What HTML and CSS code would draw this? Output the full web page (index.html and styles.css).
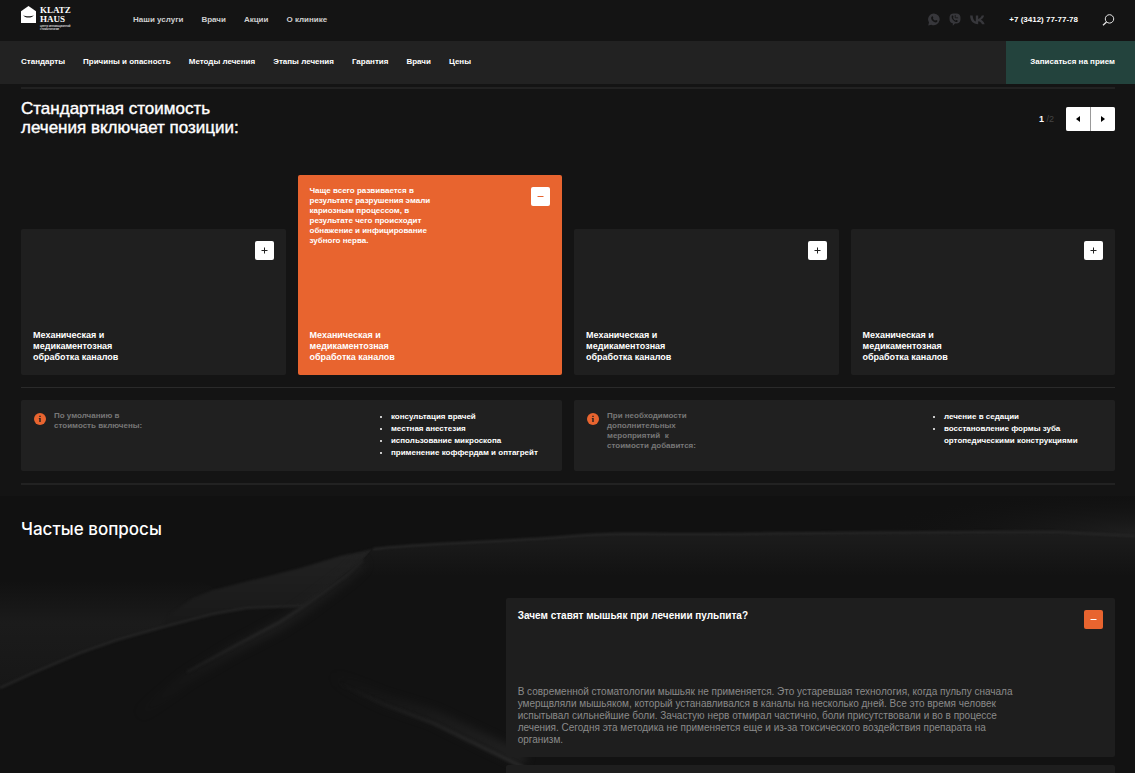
FILE: index.html
```html
<!DOCTYPE html>
<html lang="ru">
<head>
<meta charset="utf-8">
<title>Klatz Haus</title>
<meta name="viewport" content="width=device-width, initial-scale=1">
<link rel="stylesheet" href="styles.css">
</head>
<body>
<header class="header">
  <a class="logo" href="#">
    <svg class="logo-mark" viewBox="0 0 15 17" aria-hidden="true"><path fill="#fff" d="M0 5.2 7.5 0 15 5.2V17H0z"/><path fill="#141414" d="M2.2 9.2c2.6 1.4 8 1.4 10.6 0-1.6 3.2-9 3.2-10.6 0z"/></svg>
    <span class="logo-text">
      <span class="logo-name">KLATZ<br>HAUS</span>
      <span class="logo-note">центр инновационной<br>стоматологии</span>
    </span>
  </a>
  <nav class="menu" aria-label="Основное меню">
    <a href="#">Наши услуги</a><a href="#">Врачи</a><a href="#">Акции</a><a href="#">О клинике</a>
  </nav>
  <div class="socials">
    <a href="#" aria-label="WhatsApp"><svg width="12" height="13" viewBox="0 0 12 13"><path fill="#37373b" d="M6 .4a5.9 5.9 0 0 0-5 9L.2 12.500l3.200-.8A5.900 5.900 0 1 0 6 .4z"/><path fill="#141414" d="M4.100 3.300c.3-.2.600-.1.700.2l.5 1.200c0 .3-.5.6-.5.8.5 1.100 1.300 1.800 2.400 2.200.3 0 .5-.7.900-.7l1.200.6c.3.200.2.700 0 1-1.200 1.600-3.200.7-4.600-.5C3.200 6.700 2.400 4.500 4.100 3.300z"/></svg></a>
    <a href="#" aria-label="Viber"><svg width="12" height="13" viewBox="0 0 12 13"><path fill="#37373b" d="M3 .8c2-.5 4-.5 6 0C11 1.400 11.500 3 11.500 5.500S11 9.700 9 10.200c-1 .3-2 .4-3 .4L3.800 12.800V10.300C1.200 9.800.5 8.500.5 5.500S1.200 1.300 3 .8z"/><path fill="#141414" d="M3.200 2.500c.6-.4 1 .3 1.200 1 .3.800-.5.9-.3 1.500.4 1.300 1.200 2 2.200 2.500.6.200.7-.7 1.300-.4 1 .5 1.400.8 1 1.300-1 1.200-2.400.5-3.600-.5C3.400 6.700 1.700 3.600 3.200 2.500z"/><path fill="none" stroke="#141414" stroke-width=".8" d="M6.200 2v2.800h2.900"/></svg></a>
    <a href="#" aria-label="ВКонтакте"><svg width="15" height="10" viewBox="0 0 15 10"><path fill="#37373b" d="M8.200 9.300C3.100 9.300.3 6 .1.600h2.600C2.800 4.500 4.500 6.200 5.800 6.500V.6h2.400V4c1.400-.2 3-1.700 3.500-3.400h2.400c-.4 2.100-2 3.600-3.200 4.200 1.200.5 3 1.900 3.800 4.500H12C11.500 7.700 10 6.400 8.200 6.200z"/></svg></a>
  </div>
  <a class="phone" href="tel:+73412777778">+7 (3412) 77-77-78</a>
  <button class="search" aria-label="Поиск"><svg width="13" height="12" viewBox="0 0 13 12" fill="none" stroke="#e8e8e8"><circle cx="7.500" cy="4.900" r="4.200"/><path d="M4.500 8 1 11.300" stroke-width="1.300"/></svg></button>
</header>

<div class="subnav">
  <nav class="anchors" aria-label="Разделы страницы">
    <a href="#">Стандарты</a><a href="#">Причины и опасность</a><a href="#">Методы лечения</a><a href="#">Этапы лечения</a><a href="#">Гарантия</a><a href="#">Врачи</a><a href="#">Цены</a>
  </nav>
  <a class="cta" href="#">Записаться на прием</a>
</div>

<main>
  <section class="price">
    <div class="price-head">
      <h2>Стандартная стоимость<br>лечения включает позиции:</h2>
      <div class="pager">
        <span class="count">1 <i>/2</i></span>
        <div class="arrows">
          <button aria-label="Назад"><svg width="4" height="6" viewBox="0 0 4 6"><path d="M4 0v6L0 3z"/></svg></button>
          <button aria-label="Вперед"><svg width="4" height="6" viewBox="0 0 4 6"><path d="M0 0v6l4-3z"/></svg></button>
        </div>
      </div>
    </div>
    <div class="cards">
      <article class="card">
        <button class="toggle" aria-label="Раскрыть"><svg width="7" height="7" viewBox="0 0 7 7"><path d="M.5 3.500h6M3.500.5v6"/></svg></button>
        <h3>Механическая и<br>медикаментозная<br>обработка каналов</h3>
      </article>
      <article class="card card-open">
        <p>Чаще всего развивается в<br>результате разрушения эмали<br>кариозным процессом, в<br>результате чего происходит<br>обнажение и инфицирование<br>зубного нерва.</p>
        <button class="toggle" aria-label="Свернуть"><svg width="7" height="7" viewBox="0 0 7 7"><path d="M.5 3.500h6"/></svg></button>
        <h3>Механическая и<br>медикаментозная<br>обработка каналов</h3>
      </article>
      <article class="card">
        <button class="toggle" aria-label="Раскрыть"><svg width="7" height="7" viewBox="0 0 7 7"><path d="M.5 3.500h6M3.500.5v6"/></svg></button>
        <h3>Механическая и<br>медикаментозная<br>обработка каналов</h3>
      </article>
      <article class="card">
        <button class="toggle" aria-label="Раскрыть"><svg width="7" height="7" viewBox="0 0 7 7"><path d="M.5 3.500h6M3.500.5v6"/></svg></button>
        <h3>Механическая и<br>медикаментозная<br>обработка каналов</h3>
      </article>
    </div>
    <div class="notes">
      <div class="note">
        <div class="note-label">
          <svg width="12" height="12" viewBox="0 0 12 12" aria-hidden="true"><circle cx="6" cy="6" r="6" fill="#e8642f"/><path fill="#202020" d="M5.300 2.800h1.400v1.300H5.300zM4.800 5h1.900v4H5.300V5.800h-.5z"/></svg>
          <p>По умолчанию в<br>стоимость включены:</p>
        </div>
        <ul><li>консультация врачей</li><li>местная анестезия</li><li>использование микроскопа</li><li>применение коффердам и оптагрейт</li></ul>
      </div>
      <div class="note">
        <div class="note-label">
          <svg width="12" height="12" viewBox="0 0 12 12" aria-hidden="true"><circle cx="6" cy="6" r="6" fill="#e8642f"/><path fill="#202020" d="M5.300 2.800h1.400v1.300H5.300zM4.800 5h1.900v4H5.300V5.800h-.5z"/></svg>
          <p>При необходимости<br>дополнительных<br>мероприятий&nbsp; к<br>стоимости добавится:</p>
        </div>
        <ul><li>лечение в седации</li><li>восстановление формы зуба<br>ортопедическими конструкциями</li></ul>
      </div>
    </div>
  </section>

  <section class="faq">
    <svg class="dunes" viewBox="0 0 1135 277" preserveAspectRatio="xMidYMin slice" aria-hidden="true">
      <defs>
        <linearGradient id="far" x1="0" y1="0" x2="0" y2="1"><stop offset="0" stop-color="#222"/><stop offset="1" stop-color="#181818"/></linearGradient>
        <linearGradient id="haze" x1="0" y1="85" x2="0" y2="190" gradientUnits="userSpaceOnUse"><stop offset="0" stop-color="#1b1b1b" stop-opacity="0"/><stop offset=".4" stop-color="#1b1b1b"/><stop offset="1" stop-color="#171717"/></linearGradient>
        <linearGradient id="slope" x1="0" y1="38" x2="0" y2="80" gradientUnits="userSpaceOnUse"><stop offset="0" stop-color="#1c1c1c"/><stop offset="1" stop-color="#121212"/></linearGradient>
        <linearGradient id="fade" x1="130" y1="0" x2="363" y2="0" gradientUnits="userSpaceOnUse"><stop offset="0" stop-color="#242424" stop-opacity="0"/><stop offset=".6" stop-color="#242424"/><stop offset="1" stop-color="#202020"/></linearGradient>
        <linearGradient id="fold" x1="330" y1="0" x2="510" y2="0" gradientUnits="userSpaceOnUse"><stop offset="0" stop-color="#262626" stop-opacity="0"/><stop offset="1" stop-color="#262626"/></linearGradient>
        <radialGradient id="glow" cx="1135" cy="36" r="260" gradientTransform="matrix(1 0 0 .16 0 30)" gradientUnits="userSpaceOnUse"><stop offset="0" stop-color="#1e1e1e"/><stop offset="1" stop-color="#111" stop-opacity="0"/></radialGradient>
        <filter id="soft" x="-20%" y="-20%" width="140%" height="140%" color-interpolation-filters="sRGB"><feGaussianBlur stdDeviation="5"/></filter>
        <filter id="edge" x="-10%" y="-20%" width="120%" height="140%" color-interpolation-filters="sRGB"><feGaussianBlur stdDeviation="1"/></filter>
      </defs>
      <path fill="url(#glow)" d="M800 0H1135V60H800z"/>
      <path fill="url(#haze)" d="M0 85H200L260 115V277H0z"/>
      <path fill="url(#far)" d="M170 118 193 102 213 94 300 72 340 60 373 53 363 64 303 112 247 113 160 134z" filter="url(#edge)"/>
      <path fill="#121212" d="M0 192 33 177 80 157 117 144 167 130 213 118 247 112 303 110 363 64 373 53C420 47 500 46 560 41S640 38 680 38 1000 35 1060 36L1135 40V277H0z"/>
      <path fill="url(#slope)" d="M303 110 363 64 373 53C420 47 500 46 560 41S640 38 680 38 1000 35 1060 36L1135 40V110z"/>
      <path fill="none" stroke="#282828" stroke-width="2" d="M373 53C420 47 500 46 560 41S640 38 680 38 1000 35 1060 36L1135 40" filter="url(#edge)"/>
      <path fill="none" stroke="#262626" stroke-width="2" d="M0 192 33 177 80 157 117 144 167 130 213 118 247 112 303 110" filter="url(#edge)"/>
      <path fill="none" stroke="url(#fade)" stroke-width="9" opacity=".7" d="M363 66 347 81 303 114 280 129 233 154 187 182 140 218" filter="url(#soft)"/>
      <path fill="none" stroke="url(#fade)" stroke-width="3" d="M363 64 347 79 303 111 280 126 233 151 187 176" filter="url(#edge)"/>
      <path fill="none" stroke="url(#fold)" stroke-width="12" opacity=".8" d="M330 180 383 204 433 220 525 264" filter="url(#soft)"/>
      <path fill="none" stroke="url(#fold)" stroke-width="4" d="M340 188 383 208 433 227 525 272" filter="url(#edge)"/>
    </svg>
    <h2>Частые вопросы</h2>
    <div class="faq-list">
      <article class="answer">
        <div class="answer-head">
          <h3>Зачем ставят мышьяк при лечении пульпита?</h3>
          <button class="toggle toggle-accent" aria-label="Свернуть"><svg width="7" height="7" viewBox="0 0 7 7"><path d="M.5 3.500h6"/></svg></button>
        </div>
        <p>В современной стоматологии мышьяк не применяется. Это устаревшая технология, когда пульпу сначала<br>умерщвляли мышьяком, который устанавливался в каналы на несколько дней. Все это время человек<br>испытывал сильнейшие боли. Зачастую нерв отмирал частично, боли присутствовали и во в процессе<br>лечения. Сегодня эта методика не применяется еще и из-за токсического воздействия препарата на<br>организм.</p>
      </article>
      <article class="answer answer-next"></article>
    </div>
  </section>
</main>
</body>
</html>
```
FILE: styles.css
```css
* { box-sizing: border-box; margin: 0; padding: 0; }
body {
  display: flex;
  flex-direction: column;
  height: 100vh;
  overflow: hidden;
  background: #141414;
  color: #fff;
  font: bold 8px/10px "Liberation Sans", Arial, sans-serif;
}
a { color: inherit; text-decoration: none; }
button { border: 0; background: #fff; font: inherit; cursor: pointer; }
svg { display: block; }
h2 { font: 500 17px/19px "Liberation Sans", Arial, sans-serif; }
main { flex: 1; display: flex; flex-direction: column; min-height: 0; }

.header { display: flex; align-items: center; height: 41px; padding: 0 20px 2px 21px; flex: none; }
.logo { display: flex; gap: 4px; width: 112px; padding-bottom: 2px; }
.logo-mark { width: 15px; height: 17px; }
.logo-text { display: flex; flex-direction: column; gap: 1px; }
.logo-name { font: bold 9px/9px "Liberation Serif", serif; }
.logo-note { font-size: 3px; line-height: 3px; font-weight: normal; white-space: nowrap; }
.menu { display: flex; gap: 18px; color: #cfcfcf; }
.socials { display: flex; align-items: center; gap: 9px; margin-left: auto; }
.phone { margin-left: 24px; white-space: nowrap; }
.search { margin-left: 24px; background: none; }

.subnav { display: flex; justify-content: space-between; flex: none; height: 43px; padding-left: 21px; background: #222; }
.anchors { display: flex; align-items: center; gap: 18px; padding-bottom: 2px; }
.cta { display: flex; align-items: center; padding: 0 20px 2px 24px; background: #23433d; }

.price { flex: none; margin: 3px 20px 0 21px; padding-bottom: 12px; border-top: 2px solid #222; border-bottom: 2px solid #222; }
.price-head { display: flex; justify-content: space-between; align-items: flex-end; padding-top: 10px; }
.price h2 { -webkit-text-stroke: 0.4px #fff; }
.pager { display: flex; align-items: center; gap: 12px; padding-bottom: 6px; }
.count { font-size: 9px; }
.count i { color: #444; font-style: normal; font-weight: normal; }
.arrows { display: flex; gap: 1px; background: #999; border-radius: 2px; overflow: hidden; }
.arrows button { display: grid; place-items: center; width: 24px; height: 24px; }

.cards { display: grid; grid-template-columns: repeat(4, 1fr); gap: 12px; align-items: end; padding: 38px 0 12px; border-bottom: 1px solid #2a2a2a; }
.card { position: relative; display: flex; flex-direction: column; justify-content: space-between; min-height: 146px; padding: 11px 12px 12px; background: #1f1f1f; border-radius: 2px; }
.card-open { min-height: 200px; background: #e8642f; }
.card h3 { margin-top: auto; font-size: 9px; line-height: 11px; }
.toggle { display: grid; place-items: center; flex: none; width: 19px; height: 19px; border-radius: 2px; }
.card .toggle { position: absolute; top: 12px; right: 12px; }
.toggle path { fill: none; stroke: #222; }
.card-open .toggle path { stroke: #e8642f; }
.toggle-accent { background: #e8642f; }
.toggle-accent path { stroke: #fff; }

.notes { display: grid; grid-template-columns: 1fr 1fr; gap: 12px; padding-top: 12px; }
.note { display: grid; grid-template-columns: 9fr 4fr; min-height: 71px; padding: 11px 12px; background: #202020; border-radius: 2px; }
.note-label { display: flex; gap: 8px; color: #777; }
.note-label svg { flex: none; margin: 2px 0 0 1px; }
.note ul { line-height: 12px; white-space: nowrap; }

.faq { position: relative; flex: 1; display: flex; flex-direction: column; gap: 59px; min-height: 0; margin-top: 11px; padding: 24px 20px 0 21px; background: #111; overflow: hidden; }
.dunes { position: absolute; inset: 0; width: 100%; height: 100%; }
.faq h2, .faq-list { position: relative; }
.faq h2 { font-family: Inter, sans-serif; }
.faq-list { flex: 1; display: flex; flex-direction: column; gap: 8px; margin-left: 44.3%; }
.answer { flex: none; padding: 12px 12px 11px; background: #1e1e1e; border-radius: 2px; }
.answer-head { display: flex; justify-content: space-between; min-height: 76px; }
.answer h3 { font-size: 10px; line-height: 12px; }
.answer p { color: #8a8a8a; font-size: 10px; line-height: 12px; font-weight: normal; white-space: nowrap; }
.answer-next { flex: 1; }
```
